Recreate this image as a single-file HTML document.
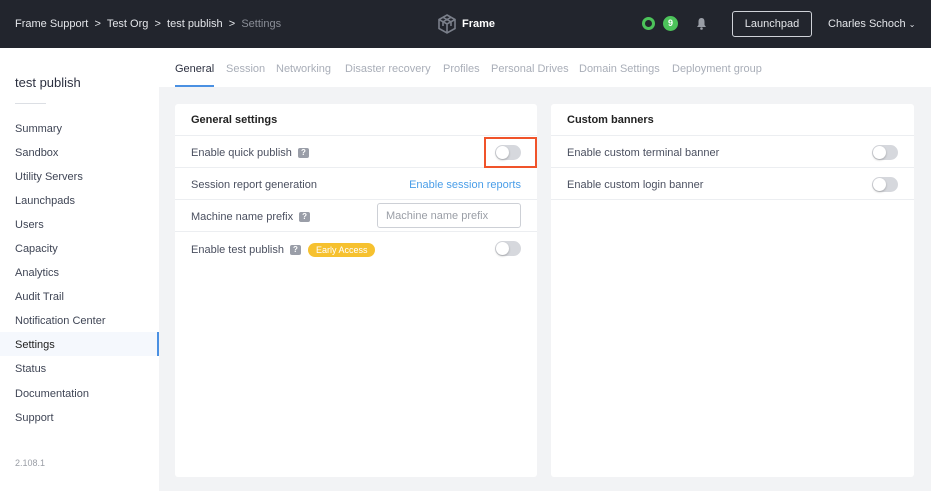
<!DOCTYPE html>
<html><head><meta charset="utf-8"><style>
*{box-sizing:border-box;margin:0;padding:0}
body{width:931px;height:491px;overflow:hidden;font-family:"Liberation Sans",sans-serif;background:#f2f3f5;position:relative;font-size:11px;color:#4a4f5c}
.hdr{position:absolute;left:0;top:0;width:931px;height:48px;background:#22252d;color:#e4e6ea}
.abs{position:absolute}
.side{position:absolute;left:0;top:48px;width:159px;height:443px;background:#fff}
.side .it{position:absolute;left:15px;font-size:11px;color:#3f4555}
.tabs{position:absolute;left:159px;top:48px;width:772px;height:39px;background:#fff}
.tabs span{position:absolute;top:15px;font-size:11px;color:#a9aeb8}
.card{position:absolute;top:104px;background:#fff;border-radius:3px;height:373px}
.row{position:absolute;left:0;right:0;height:32px;border-bottom:1px solid #eceef1}
.row .l{position:absolute;left:16px;top:11px;color:#4b5060}
.tg{position:absolute;width:26px;height:15px;border-radius:8px;background:#d6d8dd}
.tg:after{content:"";position:absolute;left:1px;top:1px;width:13px;height:13px;border-radius:50%;background:#fff;box-shadow:0 1px 2px rgba(0,0,0,.25)}
.q{display:inline-block;width:11px;height:10px;background:#9a9ea8;color:#fff;border-radius:2px;font-size:8px;text-align:center;line-height:10px;font-weight:bold;vertical-align:1px;margin-left:6px}
</style></head><body>
<div class="hdr">
<div class="abs" style="left:15px;top:18px;font-size:11px">Frame Support &nbsp;&gt;&nbsp; Test Org &nbsp;&gt;&nbsp; test publish &nbsp;&gt;&nbsp; <span style="color:#8a8e97">Settings</span></div>
<svg class="abs" style="left:438px;top:14px" width="18" height="20" viewBox="0 0 18 20"><path d="M9 1L17 5.5V14.5L9 19L1 14.5V5.5Z M1 5.5L9 10L17 5.5 M9 10V19 M5 3.3L13 7.8V12 M13 3.3L5 7.8V12" fill="none" stroke="#7a7f8a" stroke-width="1.6"/></svg>
<div class="abs" style="left:462px;top:18px;font-size:11px;font-weight:bold;color:#fff">Frame</div>
<div class="abs" style="left:642px;top:17px;width:13px;height:13px;border-radius:50%;border:3px solid #4cc35a"></div>
<div class="abs" style="left:663px;top:16px;width:15px;height:15px;border-radius:50%;background:#4cc35a;color:#fff;font-size:9px;font-weight:bold;text-align:center;line-height:15px">9</div>
<svg class="abs" style="left:696px;top:17px" width="11" height="13" viewBox="0 0 11 13"><path d="M5.5 1C3 1 2.5 3 2.5 5V8L1 10H10L8.5 8V5C8.5 3 8 1 5.5 1Z" fill="#9a9ea6"/><circle cx="5.5" cy="11.5" r="1.3" fill="#9a9ea6"/></svg>
<div class="abs" style="left:732px;top:11px;width:80px;height:26px;border:1px solid #cfd2d8;border-radius:3px;text-align:center;line-height:24px;font-size:11px">Launchpad</div>
<div class="abs" style="left:828px;top:18px;font-size:11px">Charles Schoch <span style="font-size:8px">&#8964;</span></div>
</div>
<div class="side">
<div class="it" style="top:27px;font-size:13px;color:#2c3040">test publish</div>
<div class="abs" style="left:15px;top:55px;width:31px;height:1px;background:#dcdfe4"></div>
<div class="it" style="top:75px">Summary</div>
<div class="it" style="top:99px">Sandbox</div>
<div class="it" style="top:123px">Utility Servers</div>
<div class="it" style="top:147px">Launchpads</div>
<div class="it" style="top:171px">Users</div>
<div class="it" style="top:195px">Capacity</div>
<div class="it" style="top:219px">Analytics</div>
<div class="it" style="top:243px">Audit Trail</div>
<div class="it" style="top:267px">Notification Center</div>
<div class="abs" style="left:0;top:284px;width:159px;height:24px;background:#f5f8fd;border-right:2px solid #4a90e2"></div>
<div class="it" style="top:291px;color:#222">Settings</div>
<div class="it" style="top:315px">Status</div>
<div class="it" style="top:340px">Documentation</div>
<div class="it" style="top:364px">Support</div>
<div class="it" style="top:410px;font-size:9px;color:#9a9ea6">2.108.1</div>
</div>
<div class="tabs">
<span style="left:16px;color:#2c3040">General</span>
<div class="abs" style="left:16px;top:37px;width:39px;height:2px;background:#4a90e2"></div>
<span style="left:67px">Session</span><span style="left:117px">Networking</span><span style="left:186px">Disaster recovery</span><span style="left:284px">Profiles</span><span style="left:332px">Personal Drives</span><span style="left:420px">Domain Settings</span><span style="left:513px">Deployment group</span>
</div>
<div class="card" style="left:175px;width:362px">
<div class="row" style="top:0"><div class="l" style="color:#222;font-weight:bold;top:10px">General settings</div></div>
<div class="row" style="top:32px"><div class="l">Enable quick publish<span class="q">?</span></div><div class="tg" style="left:320px;top:9px"></div>
<div class="abs" style="left:309px;top:1px;width:53px;height:31px;border:2px solid #f0532a"></div></div>
<div class="row" style="top:64px"><div class="l">Session report generation</div><div class="abs" style="right:16px;top:11px;color:#4a9ee8">Enable session reports</div></div>
<div class="row" style="top:96px"><div class="l">Machine name prefix<span class="q">?</span></div><div class="abs" style="left:202px;top:3px;width:144px;height:25px;border:1px solid #cdd0d6;border-radius:3px;padding:6px 8px;color:#9a9ea6">Machine name prefix</div></div>
<div class="row" style="top:128px;border:none"><div class="l">Enable test publish<span class="q">?</span><span style="display:inline-block;margin-left:7px;background:#f6c12f;color:#fff;border-radius:8px;padding:2px 8px;font-size:9px">Early Access</span></div><div class="tg" style="left:320px;top:9px"></div></div>
</div>
<div class="card" style="left:551px;width:363px">
<div class="row" style="top:0"><div class="l" style="color:#222;font-weight:bold;top:10px">Custom banners</div></div>
<div class="row" style="top:32px"><div class="l">Enable custom terminal banner</div><div class="tg" style="left:321px;top:9px"></div></div>
<div class="row" style="top:64px"><div class="l">Enable custom login banner</div><div class="tg" style="left:321px;top:9px"></div></div>
</div>
</body></html>
